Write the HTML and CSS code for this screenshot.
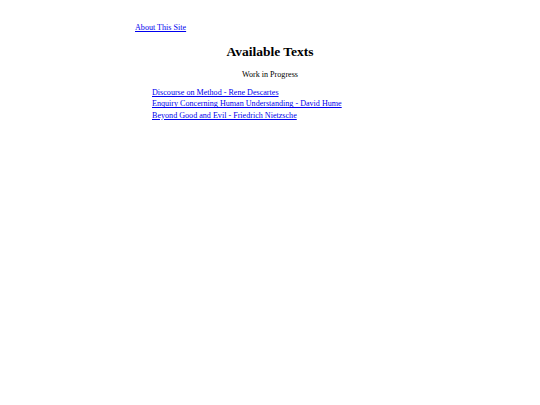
FILE: index.html
```html
<!DOCTYPE html>
<html>
<head>
<meta charset="utf-8">
<title>Available Texts</title>
<link rel="stylesheet" href="styles.css">
</head>
<body>
<div class="page">
  <p class="about"><a href="#">About This Site</a></p>
  <h1 class="title">Available Texts</h1>
  <p class="status">Work in Progress</p>
  <ul class="texts">
    <li><a href="#">Discourse on Method - Rene Descartes</a></li>
    <li><a href="#">Enquiry Concerning Human Understanding - David Hume</a></li>
    <li><a href="#">Beyond Good and Evil - Friedrich Nietzsche</a></li>
  </ul>
</div>
</body>
</html>
```

FILE: styles.css
```css
html, body {
  margin: 0;
  padding: 0;
  background: #ffffff;
}
body {
  font-family: "Liberation Serif", "Times New Roman", serif;
  font-size: 8.1px;
  color: #000000;
}
.page {
  width: 270px;
  margin: 0 auto;
  padding-top: 23px;
}
a {
  color: #0000ee;
  text-decoration: underline;
}
.about {
  margin: 0;
  line-height: 10px;
}
.title {
  margin: 11px 0 0;
  font-size: 13.5px;
  line-height: 16px;
  text-align: center;
  font-weight: bold;
}
.status {
  margin: 10px 0 0;
  line-height: 10px;
  text-align: center;
}
.texts {
  list-style: none;
  margin: 7px 0 0;
  padding: 0 0 0 17px;
}
.texts li {
  line-height: 11.3px;
}
```
